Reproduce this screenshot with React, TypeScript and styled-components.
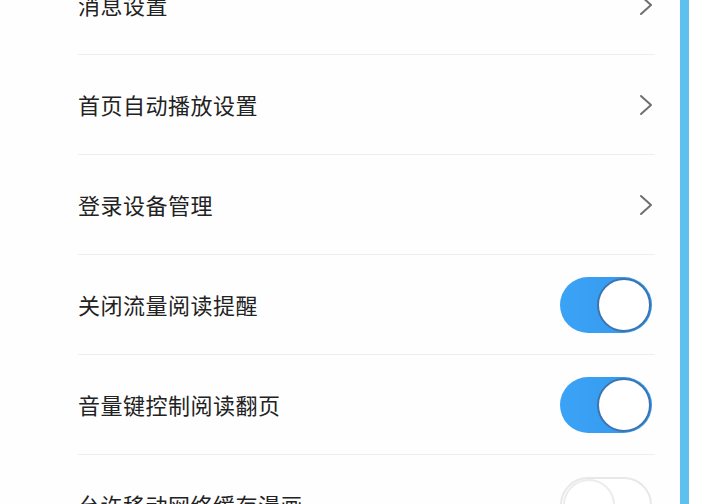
import React from "react";
import styled, { createGlobalStyle } from "styled-components";

const Global = createGlobalStyle`
  html, body {
    margin: 0;
    padding: 0;
    background: #ffffff;
    overflow: hidden;
  }
  body {
    font-family: "Noto Sans CJK SC", "Noto Sans", sans-serif;
  }
`;

const Screen = styled.div`
  width: 720px;
  height: 504px;
  overflow: hidden;
  display: flex;
  background: #ffffff;
`;

const Content = styled.div`
  width: 680px;
  flex: none;
  background: #fefefe;
`;

const ScrollBar = styled.div`
  width: 9px;
  flex: none;
  background: #5dc0ef;
`;

const Rest = styled.div`
  flex: 1;
  background: #ffffff;
`;

const List = styled.div`
  margin-top: -45px;
  margin-left: 78px;
  width: 577px;
  display: flex;
  flex-direction: column;
`;

const Row = styled.div`
  height: 99px;
  border-bottom: 1px solid #eeeeee;
  display: flex;
  align-items: center;
  justify-content: space-between;
  padding-right: 3px;
`;

const Label = styled.span`
  font-size: 22px;
  color: #222222;
  letter-spacing: 0.5px;
  line-height: 1;
  margin-top: -2px;
`;

const Chevron = styled.svg`
  width: 14px;
  height: 22px;
  margin-right: -1px;
`;

const Track = styled.div<{ $on: boolean }>`
  width: 92px;
  height: 56px;
  box-sizing: border-box;
  border-radius: 28px;
  display: flex;
  align-items: center;
  justify-content: ${(p) => (p.$on ? "flex-end" : "flex-start")};
  background: ${(p) =>
    p.$on ? "linear-gradient(90deg, #3ba3f6 0%, #3497ec 100%)" : "#ffffff"};
  border: ${(p) => (p.$on ? "none" : "2px solid #e8e8e8")};
`;

const Knob = styled.div<{ $on: boolean }>`
  width: ${(p) => (p.$on ? "54px" : "52px")};
  height: ${(p) => (p.$on ? "54px" : "52px")};
  box-sizing: border-box;
  border-radius: 50%;
  background: #ffffff;
  border: 2px solid ${(p) => (p.$on ? "#3b74b0" : "#ececec")};
  margin: 0 1px;
`;

const items: { label: string; kind: "link" | "on" | "off" }[] = [
  { label: "消息设置", kind: "link" },
  { label: "首页自动播放设置", kind: "link" },
  { label: "登录设备管理", kind: "link" },
  { label: "关闭流量阅读提醒", kind: "on" },
  { label: "音量键控制阅读翻页", kind: "on" },
  { label: "允许移动网络缓存漫画", kind: "off" },
];

export default function App() {
  return (
    <>
      <Global />
      <Screen>
        <Content>
          <List>
            {items.map((it) => (
              <Row key={it.label}>
                <Label>{it.label}</Label>
                {it.kind === "link" ? (
                  <Chevron viewBox="0 0 14 22">
                    <polyline
                      points="2,2 12,11 2,20"
                      fill="none"
                      stroke="#6f6f6f"
                      strokeWidth="2"
                      strokeLinecap="round"
                      strokeLinejoin="round"
                    />
                  </Chevron>
                ) : (
                  <Track $on={it.kind === "on"}>
                    <Knob $on={it.kind === "on"} />
                  </Track>
                )}
              </Row>
            ))}
          </List>
        </Content>
        <ScrollBar />
        <Rest />
      </Screen>
    </>
  );
}
